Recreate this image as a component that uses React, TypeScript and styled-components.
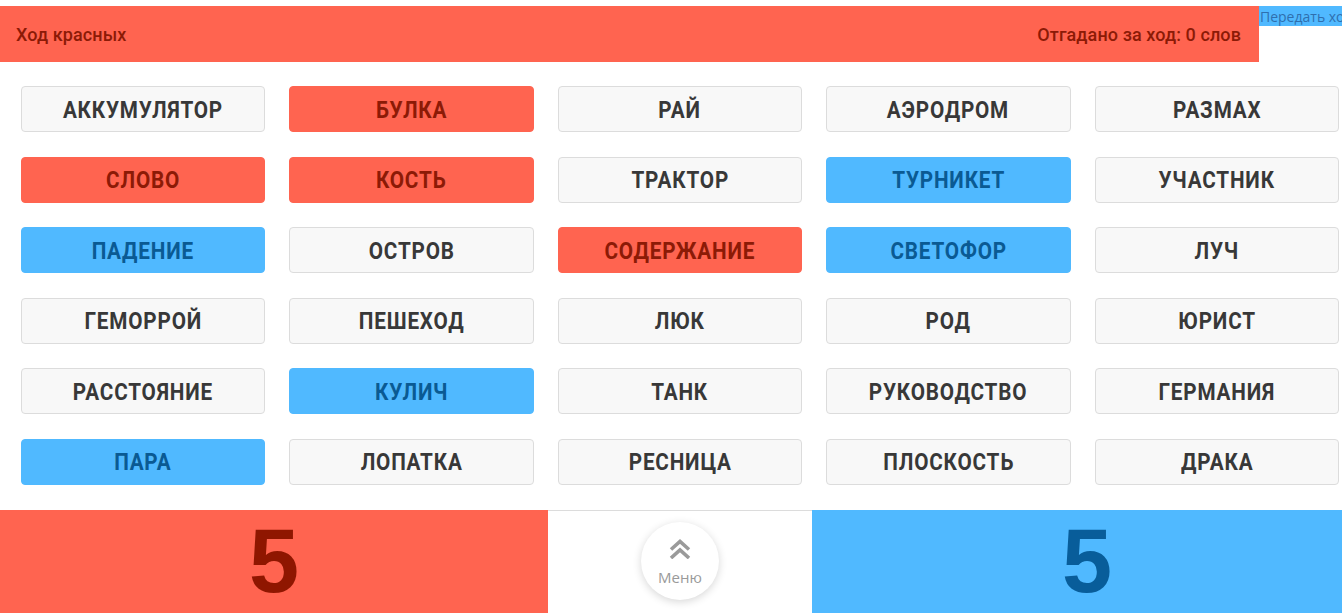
import styled, { createGlobalStyle } from 'styled-components'

type Team = 'red' | 'blue' | 'none'

const words: { text: string; team: Team }[] = [
  { text: 'АККУМУЛЯТОР', team: 'none' },
  { text: 'БУЛКА', team: 'red' },
  { text: 'РАЙ', team: 'none' },
  { text: 'АЭРОДРОМ', team: 'none' },
  { text: 'РАЗМАХ', team: 'none' },
  { text: 'СЛОВО', team: 'red' },
  { text: 'КОСТЬ', team: 'red' },
  { text: 'ТРАКТОР', team: 'none' },
  { text: 'ТУРНИКЕТ', team: 'blue' },
  { text: 'УЧАСТНИК', team: 'none' },
  { text: 'ПАДЕНИЕ', team: 'blue' },
  { text: 'ОСТРОВ', team: 'none' },
  { text: 'СОДЕРЖАНИЕ', team: 'red' },
  { text: 'СВЕТОФОР', team: 'blue' },
  { text: 'ЛУЧ', team: 'none' },
  { text: 'ГЕМОРРОЙ', team: 'none' },
  { text: 'ПЕШЕХОД', team: 'none' },
  { text: 'ЛЮК', team: 'none' },
  { text: 'РОД', team: 'none' },
  { text: 'ЮРИСТ', team: 'none' },
  { text: 'РАССТОЯНИЕ', team: 'none' },
  { text: 'КУЛИЧ', team: 'blue' },
  { text: 'ТАНК', team: 'none' },
  { text: 'РУКОВОДСТВО', team: 'none' },
  { text: 'ГЕРМАНИЯ', team: 'none' },
  { text: 'ПАРА', team: 'blue' },
  { text: 'ЛОПАТКА', team: 'none' },
  { text: 'РЕСНИЦА', team: 'none' },
  { text: 'ПЛОСКОСТЬ', team: 'none' },
  { text: 'ДРАКА', team: 'none' },
]

const RED = '#ff6450'
const BLUE = '#50b9ff'

const cardBg = { red: RED, blue: BLUE, none: '#f8f8f8' }
const cardInk = { red: '#8c1a06', blue: '#0a5a93', none: '#383838' }
const cardLine = { red: RED, blue: BLUE, none: '#dcdcdc' }

const GlobalStyle = createGlobalStyle`
  html, body {
    margin: 0;
    padding: 0;
    background: #fff;
    overflow: hidden;
  }
  body {
    font-family: Roboto, "Liberation Sans", sans-serif;
  }
`

const Page = styled.div`
  width: 1342px;
  height: 613px;
  display: flex;
  flex-direction: column;
  padding-top: 6px;
  box-sizing: border-box;
`

const TopRow = styled.div`
  display: flex;
  align-items: flex-start;
`

const TurnBar = styled.div`
  flex: 0 0 1259px;
  height: 56px;
  background: ${RED};
  color: #8c1a06;
  display: flex;
  align-items: center;
  justify-content: space-between;
  padding: 1px 18px 0 16px;
  box-sizing: border-box;
  font-size: 18px;
  font-weight: 500;
  letter-spacing: 0.1px;
`

const PassButton = styled.button`
  flex: 0 0 auto;
  height: 20px;
  border: none;
  padding: 0 1px;
  background: ${BLUE};
  color: #2f6fae;
  font-family: "Open Sans", sans-serif;
  font-size: 14px;
  white-space: nowrap;
  cursor: pointer;
`

const Board = styled.div`
  display: grid;
  grid-template-columns: repeat(5, 1fr);
  column-gap: 24px;
  row-gap: 24.5px;
  padding: 24px 3px 0 21px;
`

const Card = styled.div<{ $team: Team }>`
  height: 46px;
  box-sizing: border-box;
  border-radius: 4px;
  border: 1px solid ${(p) => cardLine[p.$team]};
  background: ${(p) => cardBg[p.$team]};
  color: ${(p) => cardInk[p.$team]};
  display: flex;
  align-items: center;
  justify-content: center;
  padding-top: 2px;
  font-family: Roboto, sans-serif;
  font-weight: 700;
  font-size: 23px;
  letter-spacing: 0.9px;
`

const Word = styled.span`
  display: inline-block;
  transform: scaleX(0.9);
`

const ScoreRow = styled.div`
  margin-top: auto;
  height: 103px;
  display: flex;
`

const Score = styled.div<{ $team: 'red' | 'blue' }>`
  flex: 0 0 ${(p) => (p.$team === 'red' ? '548px' : '530px')};
  background: ${(p) => (p.$team === 'red' ? RED : BLUE)};
  color: ${(p) => (p.$team === 'red' ? '#8f1600' : '#085d9a')};
  display: flex;
  justify-content: center;
  padding-left: ${(p) => (p.$team === 'blue' ? '20px' : '0')};
  box-sizing: border-box;
  font-family: "Liberation Sans", Arial, sans-serif;
  font-weight: 700;
  font-size: 90px;
  line-height: 103px;
`

const Middle = styled.div`
  flex: 1;
  border-top: 1px solid #dcdcdc;
  display: flex;
  justify-content: center;
  padding-top: 11px;
`

const MenuButton = styled.button`
  width: 78px;
  height: 78px;
  border-radius: 50%;
  border: none;
  background: #fff;
  box-shadow: 0 2px 9px rgba(0, 0, 0, 0.16);
  display: flex;
  flex-direction: column;
  align-items: center;
  justify-content: flex-start;
  gap: 9px;
  padding: 17px 0 0;
  color: #9a9a9a;
  font-family: "Open Sans", sans-serif;
  font-size: 15px;
  line-height: 18px;
  cursor: pointer;
`

const ChevronsUp = () => (
  <svg width="24" height="20" viewBox="0 0 24 20" fill="none" stroke="#9a9a9a" strokeWidth="3.6">
    <polyline points="3,10.5 12,2.5 21,10.5" />
    <polyline points="3,19 12,11 21,19" />
  </svg>
)

export default function App() {
  return (
    <>
      <GlobalStyle />
      <Page>
        <TopRow>
          <TurnBar>
            <span>Ход красных</span>
            <span>Отгадано за ход: 0 слов</span>
          </TurnBar>
          <PassButton>Передать ход</PassButton>
        </TopRow>
        <Board>
          {words.map((w) => (
            <Card key={w.text} $team={w.team}>
              <Word>{w.text}</Word>
            </Card>
          ))}
        </Board>
        <ScoreRow>
          <Score $team="red">5</Score>
          <Middle>
            <MenuButton>
              <ChevronsUp />
              <span>Меню</span>
            </MenuButton>
          </Middle>
          <Score $team="blue">5</Score>
        </ScoreRow>
      </Page>
    </>
  )
}
